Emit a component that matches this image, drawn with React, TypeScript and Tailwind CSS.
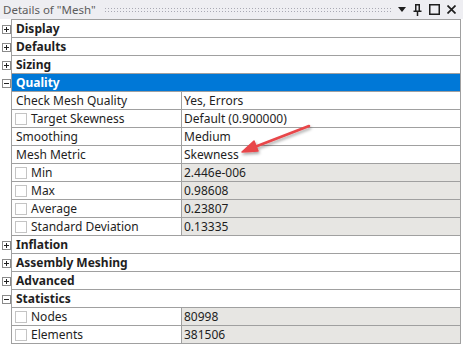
import React from "react";

type Row =
  | { kind: "section"; label: string; open: boolean; selected?: boolean }
  | { kind: "prop"; label: string; value: string; check?: boolean; readonly?: boolean };

const rows: Row[] = [
  { kind: "section", label: "Display", open: false },
  { kind: "section", label: "Defaults", open: false },
  { kind: "section", label: "Sizing", open: false },
  { kind: "section", label: "Quality", open: true, selected: true },
  { kind: "prop", label: "Check Mesh Quality", value: "Yes, Errors" },
  { kind: "prop", label: "Target Skewness", value: "Default (0.900000)", check: true },
  { kind: "prop", label: "Smoothing", value: "Medium" },
  { kind: "prop", label: "Mesh Metric", value: "Skewness" },
  { kind: "prop", label: "Min", value: "2.446e-006", check: true, readonly: true },
  { kind: "prop", label: "Max", value: "0.98608", check: true, readonly: true },
  { kind: "prop", label: "Average", value: "0.23807", check: true, readonly: true },
  { kind: "prop", label: "Standard Deviation", value: "0.13335", check: true, readonly: true },
  { kind: "section", label: "Inflation", open: false },
  { kind: "section", label: "Assembly Meshing", open: false },
  { kind: "section", label: "Advanced", open: false },
  { kind: "section", label: "Statistics", open: true },
  { kind: "prop", label: "Nodes", value: "80998", check: true, readonly: true },
  { kind: "prop", label: "Elements", value: "381506", check: true, readonly: true },
];

function Expander({ open }: { open: boolean }) {
  return (
    <div className="w-[9px] h-[9px] border border-[#8a8a8a] bg-white relative">
      <div className="absolute left-[1px] top-[3px] w-[5px] h-[1px] bg-[#222]" />
      {!open && <div className="absolute left-[3px] top-[1px] w-[1px] h-[5px] bg-[#222]" />}
    </div>
  );
}

function Check() {
  return <div className="w-[12px] h-[12px] border border-[#c4c4c4] bg-white shrink-0" />;
}

export default function App() {
  return (
    <div
      className="w-[463px] h-[347px] bg-white relative overflow-hidden text-[#1e1e1e]"
      style={{ fontFamily: '"Noto Sans", "Open Sans", sans-serif' }}
    >
      {/* title bar */}
      <div className="h-[19px] bg-[#eeeef2] flex items-center pl-[3px] pr-[7px]">
        <span className="text-[11.5px] text-[#5c5c5c] leading-none whitespace-nowrap">Details of "Mesh"</span>
        <div className="flex-1 h-[5px] ml-[8px] mr-[6px] bg-[radial-gradient(#a9a9b4_0.7px,transparent_0.9px)] bg-[length:3px_3px]" />
        <div className="flex items-center gap-[7px]">
          <svg width="8" height="5" viewBox="0 0 8 5">
            <path d="M0 0H8L4 5Z" fill="#1e1e1e" />
          </svg>
          <svg width="9" height="12" viewBox="0 0 9 12">
            <path d="M2 0.75H7M2.75 0.75V6.5M6.25 0.75V6.5M0.5 7.25H8.5M4.5 7.25V12" stroke="#1e1e1e" strokeWidth="1.5" fill="none" />
          </svg>
          <svg width="11" height="11" viewBox="0 0 11 11">
            <rect x="0.75" y="0.75" width="9.5" height="9.5" stroke="#1e1e1e" strokeWidth="1.5" fill="none" />
          </svg>
          <svg width="9" height="9" viewBox="0 0 9 9">
            <path d="M0.5 0.5L8.5 8.5M8.5 0.5L0.5 8.5" stroke="#1e1e1e" strokeWidth="1.7" />
          </svg>
        </div>
      </div>

      {/* grid */}
      <div className="flex">
        <div className="w-[11px] flex flex-col pt-[1px]">
          {rows.map((r, i) => (
            <div key={i} className="h-[18px] flex items-center justify-start pl-[2px]">
              {r.kind === "section" && <Expander open={r.open} />}
            </div>
          ))}
        </div>
        <div className="w-[450px] border border-b-0 border-[#a0a0a0]">
          {rows.map((r, i) =>
            r.kind === "section" ? (
              <div
                key={i}
                className={`h-[18px] border-b border-[#a0a0a0] flex items-center pl-[4px] text-[12px] font-bold leading-none ${
                  r.selected ? "bg-[#0078d7] text-white" : "bg-white"
                }`}
              >
                {r.label}
              </div>
            ) : (
              <div key={i} className="h-[18px] border-b border-[#a0a0a0] flex text-[12px] leading-none">
                <div className="w-[170px] border-r border-[#a0a0a0] flex items-center pl-[3px] gap-[4px] whitespace-nowrap">
                  {r.check && <Check />}
                  <span className={r.check ? "" : "pl-[1px]"}>{r.label}</span>
                </div>
                <div
                  className={`flex-1 flex items-center pl-[2px] whitespace-nowrap ${
                    r.readonly ? "bg-[#e7e6e3]" : "bg-white"
                  }`}
                >
                  {r.value}
                </div>
              </div>
            )
          )}
        </div>
      </div>

      {/* annotation arrow */}
      <svg className="absolute left-0 top-0 pointer-events-none" width="463" height="347" viewBox="0 0 463 347">
        <defs>
          <filter id="sh" x="-20%" y="-50%" width="140%" height="200%">
            <feDropShadow dx="1" dy="2" stdDeviation="1.5" floodColor="#000" floodOpacity="0.35" />
          </filter>
        </defs>
        <g filter="url(#sh)">
          <path d="M309 126 L252 148" stroke="#e8464a" strokeWidth="2.6" strokeLinecap="round" fill="none" />
          <path d="M242 152 L254 141 L258 151 Z" fill="#e8464a" stroke="#e8464a" strokeWidth="1.5" strokeLinejoin="round" />
        </g>
      </svg>
    </div>
  );
}
